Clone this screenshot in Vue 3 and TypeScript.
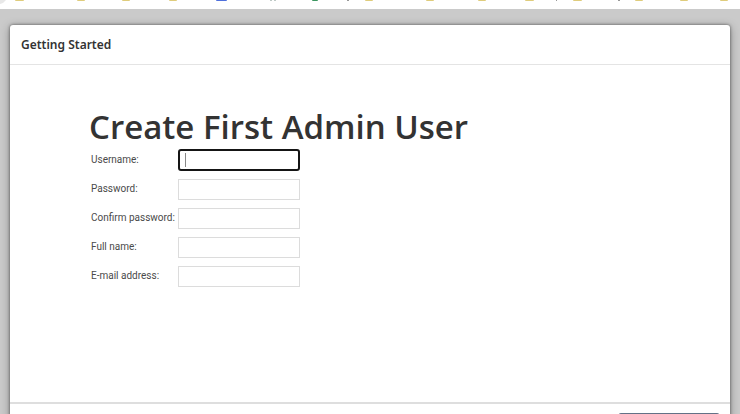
<script setup lang="ts">
import { onMounted, reactive, ref } from 'vue'

interface Field {
  id: string
  label: string
  type: string
}

interface Bookmark {
  x: number
  width: number
  tone: string
}

const fields: Field[] = [
  { id: 'username', label: 'Username:', type: 'text' },
  { id: 'password', label: 'Password:', type: 'password' },
  { id: 'confirm', label: 'Confirm password:', type: 'password' },
  { id: 'fullname', label: 'Full name:', type: 'text' },
  { id: 'email', label: 'E-mail address:', type: 'email' },
]

const bookmarks: Bookmark[] = [
  { x: 15, width: 9, tone: 'folder' },
  { x: 77, width: 8, tone: 'folder' },
  { x: 122, width: 8, tone: 'folder' },
  { x: 169, width: 8, tone: 'folder' },
  { x: 216, width: 11, tone: 'blue' },
  { x: 270, width: 2, tone: 'gray' },
  { x: 274, width: 2, tone: 'gray' },
  { x: 312, width: 6, tone: 'green' },
  { x: 347, width: 2, tone: 'dark' },
  { x: 365, width: 8, tone: 'folder' },
  { x: 426, width: 8, tone: 'folder' },
  { x: 478, width: 8, tone: 'folder' },
  { x: 525, width: 9, tone: 'folder' },
  { x: 556, width: 1, tone: 'dark' },
  { x: 573, width: 9, tone: 'folder' },
  { x: 618, width: 2, tone: 'dark' },
  { x: 635, width: 8, tone: 'folder' },
  { x: 680, width: 8, tone: 'folder' },
  { x: 720, width: 8, tone: 'folder' },
]

const values = reactive<Record<string, string>>({
  username: '',
  password: '',
  confirm: '',
  fullname: '',
  email: '',
})

const form = ref<HTMLFormElement | null>(null)

onMounted(() => {
  form.value?.querySelector('input')?.focus()
})
</script>

<template>
  <div class="page">
    <div class="bookmarks">
      <svg width="740" height="9" viewBox="0 0 740 9" aria-hidden="true">
        <path class="corner" d="M0 0h6Q4 3 0 4z" />
        <rect
          v-for="mark in bookmarks"
          :key="mark.x"
          :class="mark.tone"
          :x="mark.x"
          y="-2"
          :width="mark.width"
          height="3"
          rx="1"
        />
      </svg>
    </div>
    <main class="backdrop">
      <section class="dialog" role="dialog" aria-labelledby="dialog-title">
        <header class="dialog-header">
          <h2 id="dialog-title">Getting Started</h2>
        </header>
        <form id="setup" ref="form" class="dialog-body" @submit.prevent>
          <h1>Create First Admin User</h1>
          <div class="fields">
            <template v-for="field in fields" :key="field.id">
              <label :for="field.id">{{ field.label }}</label>
              <span class="control">
                <input
                  :id="field.id"
                  v-model="values[field.id]"
                  :type="field.type"
                  autocomplete="off"
                />
                <span v-if="field.id === 'username' && !values.username" class="caret"></span>
              </span>
            </template>
          </div>
        </form>
        <footer class="dialog-footer">
          <button type="submit" form="setup" aria-label="Continue"></button>
        </footer>
      </section>
    </main>
  </div>
</template>

<style>
body {
  background: #c8c8c8;
}
</style>

<style scoped>
.page {
  height: 100vh;
  overflow: hidden;
  display: flex;
  flex-direction: column;
  font-family: "Open Sans", "Noto Sans", sans-serif;
  color: #333;
}

.bookmarks {
  flex: none;
  height: 9px;
  overflow: hidden;
  background: #fff;
}

.bookmarks svg {
  display: block;
}

.corner { fill: #e8e8e8; }
.folder { fill: #dfcc7c; }
.blue { fill: #4f70dc; }
.gray { fill: #aab8b5; }
.green { fill: #3c9660; }
.dark { fill: #777; }

.backdrop {
  flex: 1;
  min-height: 0;
  overflow: hidden;
  padding: 16px 10px 0;
  background: #cacaca;
}

.dialog {
  background: #fff;
  border-radius: 3px;
  box-shadow: 0 0 3px #555, 0 2px 10px rgba(0, 0, 0, 0.35);
}

.dialog-header {
  display: flex;
  align-items: center;
  height: 39px;
  padding: 0 11px;
  border-bottom: 1px solid #e4e4e4;
}

h2 {
  margin: 0;
  font-family: "Noto Sans", sans-serif;
  font-size: 12px;
  line-height: 16px;
  font-weight: 600;
}

.dialog-body {
  padding: 40px 79px 115px;
}

h1 {
  margin: 0;
  font-size: 33px;
  line-height: 44px;
  font-weight: 600;
}

.fields {
  display: grid;
  grid-template-columns: 87px 122px;
  row-gap: 7px;
  align-items: center;
  padding-left: 2px;
}

label {
  font-family: Roboto, sans-serif;
  font-size: 10px;
  line-height: 22px;
  color: #4a4a4a;
  white-space: nowrap;
}

.control {
  position: relative;
  display: flex;
  align-items: flex-end;
  height: 22px;
}

input {
  box-sizing: border-box;
  width: 100%;
  height: 21px;
  margin: 0;
  padding: 0 6px;
  border: 1px solid #dcdcdc;
  background: #fff;
  font: 10px "Open Sans", sans-serif;
  color: #333;
  caret-color: transparent;
}

input:focus {
  outline: none;
  height: 22px;
  border: 2px solid #151515;
  border-radius: 3px;
}

.caret {
  position: absolute;
  left: 7px;
  top: 4px;
  width: 1px;
  height: 14px;
  background: #888;
}

.dialog-footer {
  display: flex;
  justify-content: flex-end;
  padding: 9px 10px;
  border-top: 2px solid #dedede;
}

button {
  width: 102px;
  height: 28px;
  padding: 0;
  border: 1px solid #637186;
  border-radius: 3px;
  background: #71829b;
}
</style>
